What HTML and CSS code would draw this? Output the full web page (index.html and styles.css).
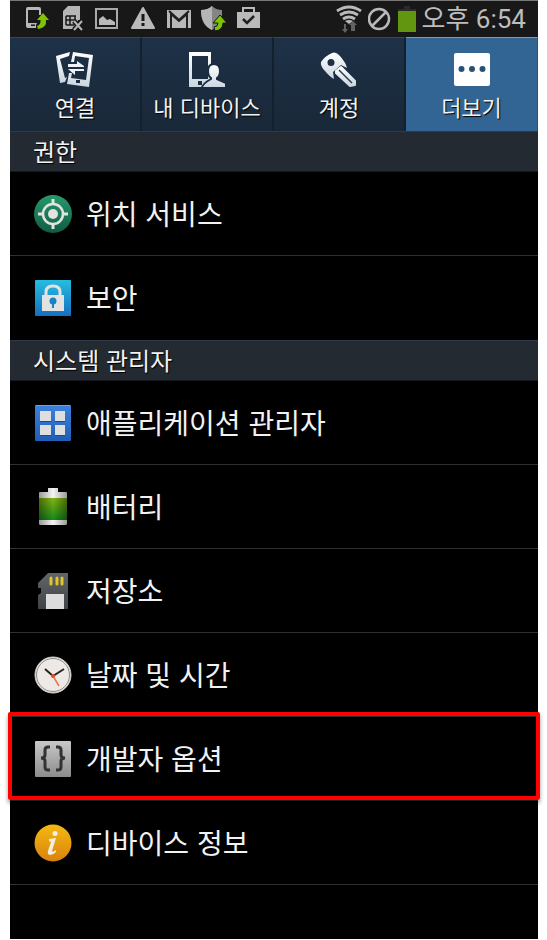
FILE: index.html
```html
<!DOCTYPE html>
<html lang="ko">
<head>
<meta charset="utf-8">
<meta name="viewport" content="width=device-width, initial-scale=1">
<title>더보기</title>
<link rel="stylesheet" href="styles.css">
</head>
<body>
<div class="phone">
  <header class="status">
    <div class="notices">
      <svg width="26" height="26" viewBox="0 0 26 26" aria-hidden="true">
        <path fill="#b8b8b8" fill-rule="evenodd" d="M3 1h11q2 0 2 2v6h-2V4H3v13h9l-1 2v3H3q-2 0-2-2V3q0-2 2-2zM6 18.500v1.500h4v-1.500z"/>
        <path fill="#7fc400" d="M18 7l6 7h-3q1 8-8 9l-1-3q4-1 3.500-6H12z"/>
      </svg>
      <svg width="24" height="26" viewBox="0 0 24 26" aria-hidden="true">
        <path fill="#b5b5b5" d="M7 0h12v14h-2v9H2V5z"/>
        <path stroke="#181818" stroke-width="1.500" fill="none" d="M5 10h10M5 14h10M5 19h8M5 10v9M9 10v9M14 10v5"/>
        <path stroke="#181818" stroke-width="5" d="M13 15l8 9M21 15l-8 9"/>
        <path stroke="#b5b5b5" stroke-width="2" d="M13 15l8 9M21 15l-8 9"/>
      </svg>
      <svg width="25" height="26" viewBox="0 0 25 26" aria-hidden="true">
        <rect x="1" y="3" width="21" height="19" fill="none" stroke="#aaa" stroke-width="2"/>
        <path fill="#b9b9b9" d="M4 13l4-3 4 4 3-1 5 3v3H4z"/>
      </svg>
      <svg width="26" height="26" viewBox="0 0 26 26" aria-hidden="true">
        <path fill="#b9b9b9" stroke="#b9b9b9" stroke-width="2" stroke-linejoin="round" d="M13 2l11 20H2z"/>
        <path stroke="#181818" stroke-width="3" d="M13 8v7M13 17v3"/>
      </svg>
      <svg width="25" height="26" viewBox="0 0 25 26" aria-hidden="true">
        <rect x="1" y="4" width="24" height="18" fill="#b8b8b8"/>
        <path fill="none" stroke="#202020" stroke-width="2" d="M5 22V8l8 7 8-7v14M3 5l10 9 10-9"/>
      </svg>
      <svg width="26" height="26" viewBox="0 0 26 26" aria-hidden="true">
        <path fill="#858585" d="M11 0q4 4 10 4 1 15-10 20Q0 19 0 4q7 0 11-4z"/>
        <path fill="#b5b5b5" d="M11 0v24Q0 19 0 4q7 0 11-4z"/>
        <path fill="#7fc400" stroke="#181818" stroke-width="1" d="M19 9l7 8h-4q0 7-8 8l-1-4q4 0 4-4h-5z"/>
      </svg>
      <svg width="24" height="26" viewBox="0 0 24 26" aria-hidden="true">
        <path fill="#bababa" d="M0 6h23v16H0z"/>
        <path fill="none" stroke="#bababa" stroke-width="2" d="M6 7V2h11v5"/>
        <path fill="none" stroke="#202020" stroke-width="2.500" d="M6 13l4 4 7-7"/>
      </svg>
    </div>
    <div class="system">
      <svg width="26" height="28" viewBox="0 0 26 28" aria-hidden="true">
        <g fill="none" stroke="#b9b9b9" stroke-width="2.800"><path d="M1 6q12-8 24 0M4 10q9-6 18 0M7 14q6-4 12 0"/></g>
        <path fill="#b9b9b9" d="M9 16q4-2 8 0l-4 3z"/>
        <path fill="#626262" d="M8 19h2v5h2l-3 4-3-4h2zM17 26h-2v-6h-2l4-4 4 4h-2v6z"/>
      </svg>
      <svg width="24" height="24" viewBox="0 0 24 24" aria-hidden="true">
        <circle cx="11" cy="12" r="10" fill="none" stroke="#b9b9b9" stroke-width="2.500"/>
        <path stroke="#b9b9b9" stroke-width="2.500" d="M4 19L18 5"/>
      </svg>
      <svg width="18" height="26" viewBox="0 0 18 26" aria-hidden="true">
        <path fill="#2b2b2b" d="M6 0h6v3h6v3H0V3h6z"/><path fill="#629610" d="M0 5h18v21H0z"/>
      </svg>
      <time class="clock">오후 6:54</time>
    </div>
  </header>

  <nav class="tabs">
    <button class="tab" type="button">
      <svg width="38" height="38" viewBox="0 0 38 38" aria-hidden="true">
        <defs><linearGradient id="silver" x2="0" y2="1"><stop stop-color="#fff"/><stop offset="1" stop-color="#c9d5de"/></linearGradient></defs>
        <path fill="url(#silver)" d="M0 5l14-4-1 4-9 3 5 19 2-1-2 5-5 1z"/>
        <path fill="url(#silver)" fill-rule="evenodd" d="M17 1l20 3-4 32-22-3 2-11h3l-1 5 15 2 3-22-14-2-1 6h-3zM20 29v3h4v-3z"/>
        <path fill="#eef3f6" d="M12 13h9v-3l7 5v1H12zM28 18v2h-9v4l-7-6z"/>
      </svg>
      <span>연결</span>
    </button>
    <button class="tab" type="button">
      <svg width="38" height="38" viewBox="0 0 38 38" aria-hidden="true">
        <path fill="url(#silver)" fill-rule="evenodd" d="M1 1h22v35H1zM4 5v23h16V5zM10 30v4h4v-4z"/>
        <path fill="url(#silver)" stroke="#1b2d42" stroke-width="2" d="M26 13q6 0 6 7 0 5-3 7v1l9 4v5H14q0-4 9-9v-1q-3-2-3-7 0-7 6-7z"/>
      </svg>
      <span>내 디바이스</span>
    </button>
    <button class="tab" type="button">
      <svg width="38" height="38" viewBox="0 0 38 38" aria-hidden="true">
        <path fill="url(#silver)" fill-rule="evenodd" d="M12 2q4-2 8 3 6 7 7 12l-6-3-8 7 1 7q-4-2-9-8-5-5-4-9Q5 5 12 2zM11 8a3.500 3.500 0 100 7 3.500 3.500 0 000-7z"/>
        <path fill="url(#silver)" stroke="url(#silver)" stroke-linejoin="round" stroke-width="2" d="M16 20l5-4 14 14v4l-5 1-14-13z"/>
        <path stroke="#2a3d50" stroke-width="1.500" d="M19 19l13 13"/>
      </svg>
      <span>계정</span>
    </button>
    <button class="tab tab-active" type="button" aria-current="page">
      <svg width="38" height="38" viewBox="0 0 38 38" aria-hidden="true">
        <rect x="1" y="2" width="36" height="33" rx="2" fill="#fff"/>
        <g fill="#275078"><circle cx="8.500" cy="18" r="3"/><circle cx="19" cy="18" r="3"/><circle cx="29.500" cy="18" r="3"/></g>
      </svg>
      <span>더보기</span>
    </button>
  </nav>

  <main>
    <h2 class="heading">권한</h2>
    <ul class="list">
      <li class="item"><a class="link" href="#location">
        <svg width="38" height="38" viewBox="0 0 38 38" aria-hidden="true">
          <defs><linearGradient id="green" x2="0" y2="1"><stop stop-color="#27986b"/><stop offset="1" stop-color="#105c43"/></linearGradient></defs>
          <circle cx="19" cy="19" r="19" fill="url(#green)"/>
          <circle cx="19" cy="19" r="10" fill="none" stroke="#e2e2e2" stroke-width="2.500"/>
          <circle cx="19" cy="19" r="5" fill="#e2e2e2"/>
          <path stroke="#e2e2e2" stroke-width="3" d="M19 4v6M19 28v6M4 19h6M28 19h6"/>
        </svg><span>위치 서비스</span></a></li>
      <li class="item"><a class="link" href="#security">
        <svg width="38" height="38" viewBox="0 0 38 38" aria-hidden="true">
          <defs><linearGradient id="cyan" x2="0" y2="1"><stop stop-color="#25bde0"/><stop offset="1" stop-color="#166fbd"/></linearGradient></defs>
          <rect x="1" y="1" width="36" height="36" rx="1" fill="url(#cyan)"/>
          <path fill="none" stroke="#e2e2e2" stroke-width="3" d="M12 17v-4q0-6 7-6t7 6v4"/>
          <path fill="#e2e2e2" d="M8 16h22v16H8z"/>
          <circle cx="19" cy="22" r="3.500" fill="#1884c6"/><path fill="#1884c6" d="M18 23h2v6h-2z"/>
        </svg><span>보안</span></a></li>
    </ul>
    <h2 class="heading">시스템 관리자</h2>
    <ul class="list">
      <li class="item"><a class="link" href="#apps">
        <svg width="38" height="38" viewBox="0 0 38 38" aria-hidden="true">
          <defs><linearGradient id="blue" x2="0" y2="1"><stop stop-color="#3c82dc"/><stop offset="1" stop-color="#205db4"/></linearGradient></defs>
          <rect x="1" y="1" width="36" height="36" rx="1" fill="url(#blue)"/><path fill="#68a5ea" d="M2 1h34v1H2z"/>
          <path fill="#174c94" d="M6 17h11v1H6zM21 17h10v1H21zM6 31h11v1H6zM21 31h10v1H21z"/>
          <path fill="#dedede" d="M6 7h11v10H6zM21 7h10v10H21zM6 21h11v10H6zM21 21h10v10H21z"/>
        </svg><span>애플리케이션 관리자</span></a></li>
      <li class="item"><a class="link" href="#battery">
        <svg width="38" height="38" viewBox="0 0 38 38" aria-hidden="true">
          <defs>
            <linearGradient id="metal"><stop stop-color="#999"/><stop offset=".5" stop-color="#f5f5f5"/><stop offset="1" stop-color="#999"/></linearGradient>
            <linearGradient id="charge" x2="0" y2="1"><stop stop-color="#83b610"/><stop offset="1" stop-color="#16891b"/></linearGradient>
            <linearGradient id="shade"><stop stop-opacity=".4"/><stop offset=".5" stop-opacity="0"/><stop offset="1" stop-opacity=".4"/></linearGradient>
          </defs>
          <path fill="url(#metal)" d="M14 0h10v4h8q1 0 1 1v31q0 1-2 1H7q-2 0-2-1V5q0-1 1-1h8z"/>
          <path fill="url(#charge)" d="M5 10h28v22H5z"/><path fill="url(#shade)" d="M5 10h28v22H5z"/>
        </svg><span>배터리</span></a></li>
      <li class="item"><a class="link" href="#storage">
        <svg width="38" height="38" viewBox="0 0 38 38" aria-hidden="true">
          <defs><linearGradient id="card" x2="0" y2="1"><stop stop-color="#606568"/><stop offset="1" stop-color="#414446"/></linearGradient></defs>
          <path fill="url(#card)" d="M14 1h20v36H4V23l3-2v-5H4v-5z"/>
          <path fill="#ddd" d="M12 22h18v15H12z"/>
          <path stroke="#e0c52b" stroke-width="3" stroke-linecap="round" d="M17 6v6M23 6v6M28 6v6"/>
        </svg><span>저장소</span></a></li>
      <li class="item"><a class="link" href="#datetime">
        <svg width="38" height="38" viewBox="0 0 38 38" aria-hidden="true">
          <circle cx="19" cy="19" r="18" fill="#eee9e4" stroke="#ccc"/>
          <circle cx="19" cy="19" r="16.500" fill="none" stroke="#8c8c8c" stroke-width="1"/>
          <path fill="none" stroke="#292524" stroke-width="2" d="M11 13l8 7 11-7"/>
          <path stroke="#ed7551" stroke-width="1.500" d="M19 20l6 10"/><circle cx="19" cy="20" r="2" fill="#e35225"/>
        </svg><span>날짜 및 시간</span></a></li>
      <li class="item item-marked"><a class="link" href="#developer">
        <svg width="38" height="38" viewBox="0 0 38 38" aria-hidden="true">
          <defs><linearGradient id="gray" x2="0" y2="1"><stop stop-color="#c8c8c8"/><stop offset="1" stop-color="#8c8c8c"/></linearGradient></defs>
          <rect x="1" y="1" width="36" height="36" rx="1" fill="url(#gray)"/>
          <path fill="none" stroke="#333" stroke-width="3" d="M16 7h-2q-3 0-3 3v5q0 3-4 3 4 0 4 3v6q0 3 3 3h2M22 7h2q3 0 3 3v5q0 3 4 3-4 0-4 3v6q0 3-3 3h-2"/>
        </svg><span>개발자 옵션</span></a></li>
      <li class="item"><a class="link" href="#about">
        <svg width="38" height="38" viewBox="0 0 38 38" aria-hidden="true">
          <defs><linearGradient id="amber" x2="0" y2="1"><stop stop-color="#f3ba12"/><stop offset="1" stop-color="#d9820c"/></linearGradient></defs>
          <circle cx="19" cy="19" r="18.500" fill="url(#amber)"/>
          <circle cx="21" cy="9.500" r="2.500" fill="#f3eee5"/>
          <path fill="#f3eee5" d="M15 15l7-1-4 13q0 2 4-1v2q-3 3-6 3-3-1-2-4l3-9-2-1z"/>
        </svg><span>디바이스 정보</span></a></li>
    </ul>
  </main>
</div>
</body>
</html>
```
FILE: styles.css
```css
* {
  box-sizing: border-box;
}

body {
  margin: 0;
  background: #fff;
  color: #f2f2f2;
  font-family: Roboto, "Noto Sans CJK KR", sans-serif;
}

.phone {
  min-height: calc(100vh - 1px);
  margin: 0 9px 1px 10px;
  background: #000;
}

svg {
  display: block;
  flex: none;
}

.status {
  display: flex;
  align-items: center;
  justify-content: space-between;
  height: 37px;
  padding: 0 12px 0 15px;
  border-top: 1px solid #777;
  background: #181818;
}

.notices {
  display: flex;
  gap: 10px;
}

.system {
  display: flex;
  align-items: center;
  gap: 6px;
}

.clock {
  color: #bdbdbd;
  font-size: 26px;
  line-height: 36px;
  white-space: nowrap;
}

.tabs {
  display: grid;
  grid-template-columns: repeat(4, 1fr);
}

.tab {
  display: flex;
  flex-direction: column;
  align-items: center;
  gap: 2px;
  height: 94px;
  padding: 13px 0 0;
  border: 0;
  border-top: 1px solid #2f4a63;
  border-right: 2px solid #14202d;
  background: linear-gradient(#1e3147, #192838);
  color: #f2f2f2;
  font: 22px/30px "Noto Sans CJK KR", sans-serif;
  text-shadow: 1px 1px 1px #000;
}

.tab-active {
  border-top-color: #6aa0d0;
  border-right: 1px solid #285078;
  background: #336594;
}

.heading {
  height: 41px;
  margin: 0;
  padding-left: 23px;
  border-top: 1px solid #303a44;
  border-bottom: 1px solid #14181c;
  background: #232a31;
  font: 24px/38px "Noto Sans CJK KR", sans-serif;
  text-shadow: 1px 1px 1px #000;
}

.list {
  margin: 0;
  padding: 0;
  list-style: none;
}

.item {
  position: relative;
  border-bottom: 1px solid #303030;
}

.list:first-of-type .item:last-child {
  border-bottom-color: #000;
}

.list:last-of-type .item:last-child {
  border-bottom-color: #303030;
}

.link {
  display: flex;
  align-items: center;
  gap: 14px;
  height: 83px;
  padding-left: 24px;
  color: #f2f2f2;
  font: 28px/40px "Noto Sans CJK KR", sans-serif;
  text-decoration: none;
}

.link span {
  padding-bottom: 2px;
}

.item-marked::after {
  content: "";
  position: absolute;
  inset: -5px -2px 0;
  border: 4px solid #f00;
  border-radius: 2px;
  box-shadow: 0 3px 4px rgba(0, 0, 0, 0.4);
  pointer-events: none;
}
```
